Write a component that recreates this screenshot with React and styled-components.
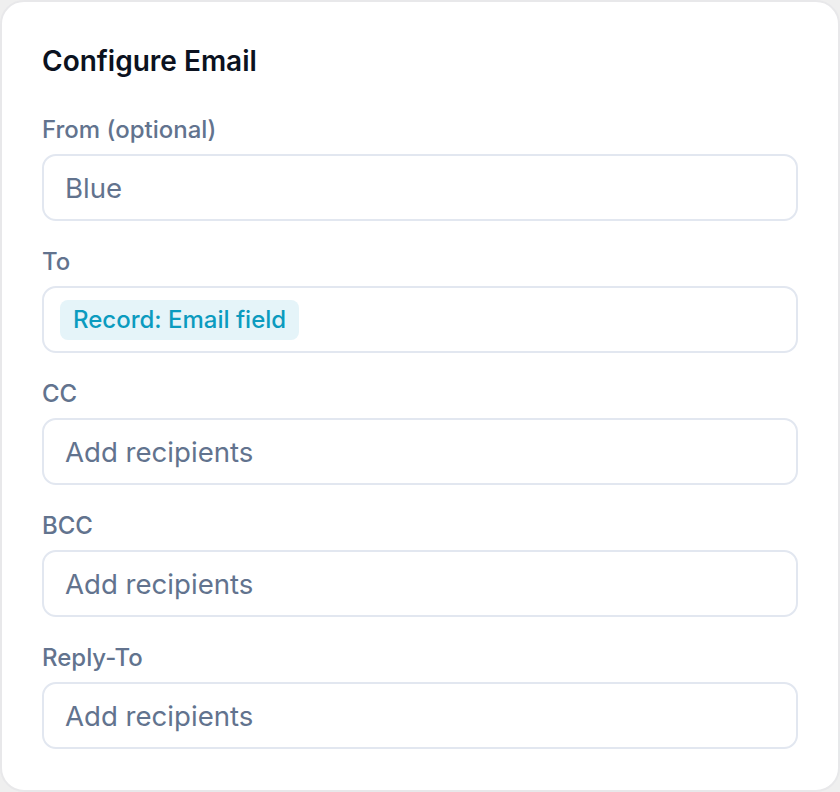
import styled, { createGlobalStyle } from "styled-components";

const GlobalStyle = createGlobalStyle`
  html, body {
    margin: 0;
    padding: 0;
    background: #efefef;
  }
  * {
    box-sizing: border-box;
  }
`;

const Card = styled.div`
  width: 840px;
  height: 792px;
  background: #ffffff;
  border: 2px solid #e8e8ea;
  border-radius: 24px;
  padding: 41px 40px 0 40px;
  font-family: Inter, "Noto Sans", sans-serif;
  display: flex;
  flex-direction: column;
`;

const Title = styled.h2`
  margin: 0 0 37px 0;
  font-size: 28px;
  line-height: 36px;
  font-weight: 600;
  color: #0b1220;
`;

const Fields = styled.div`
  display: flex;
  flex-direction: column;
  gap: 27px;
`;

const Field = styled.div`
  display: flex;
  flex-direction: column;
  gap: 10px;
`;

const Label = styled.label`
  font-size: 24px;
  line-height: 28px;
  font-weight: 500;
  color: #62738e;
`;

const InputBox = styled.div`
  height: 67px;
  border: 2px solid #e2e7f0;
  border-radius: 14px;
  background: #ffffff;
  display: flex;
  align-items: center;
  padding: 0 ${(props) => (props.$chip ? "16px" : "21px")};
  font-size: 27.6px;
  color: #62738e;
`;

const Chip = styled.span`
  display: inline-flex;
  align-items: center;
  height: 40px;
  padding: 0 13px;
  border-radius: 8px;
  background: #e5f4f9;
  color: #0b9bbf;
  font-size: 24px;
  font-weight: 500;
`;

const fields = [
  { label: "From (optional)", value: "Blue" },
  { label: "To", chip: "Record: Email field" },
  { label: "CC", value: "Add recipients" },
  { label: "BCC", value: "Add recipients" },
  { label: "Reply-To", value: "Add recipients" },
];

export default function App() {
  return (
    <>
      <GlobalStyle />
      <Card>
        <Title>Configure Email</Title>
        <Fields>
          {fields.map((f) => (
            <Field key={f.label}>
              <Label>{f.label}</Label>
              <InputBox $chip={!!f.chip}>
                {f.chip ? <Chip>{f.chip}</Chip> : f.value}
              </InputBox>
            </Field>
          ))}
        </Fields>
      </Card>
    </>
  );
}
